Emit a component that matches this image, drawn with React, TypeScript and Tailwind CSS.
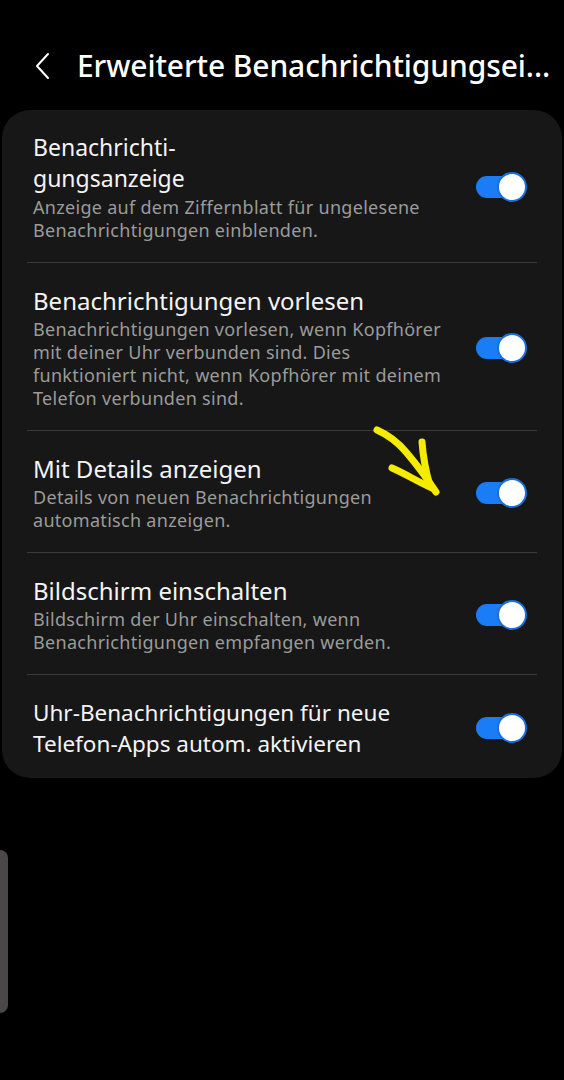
import React from "react";

interface SettingRow {
  title: string;
  subtitle?: string;
  titleSize: string;
}

// line breaks as in the phone's layout
const rows: SettingRow[] = [
  {
    title: "Benachrichti-\ngungsanzeige",
    subtitle:
      "Anzeige auf dem Ziffernblatt für ungelesene\nBenachrichtigungen einblenden.",
    titleSize: "text-[23px]",
  },
  {
    title: "Benachrichtigungen vorlesen",
    subtitle:
      "Benachrichtigungen vorlesen, wenn Kopfhörer\nmit deiner Uhr verbunden sind. Dies\nfunktioniert nicht, wenn Kopfhörer mit deinem\nTelefon verbunden sind.",
    titleSize: "text-[24px]",
  },
  {
    title: "Mit Details anzeigen",
    subtitle: "Details von neuen Benachrichtigungen\nautomatisch anzeigen.",
    titleSize: "text-[24px]",
  },
  {
    title: "Bildschirm einschalten",
    subtitle:
      "Bildschirm der Uhr einschalten, wenn\nBenachrichtigungen empfangen werden.",
    titleSize: "text-[24px]",
  },
  {
    title: "Uhr-Benachrichtigungen für neue\nTelefon-Apps autom. aktivieren",
    titleSize: "text-[22.5px]",
  },
];

function Toggle() {
  return (
    <div className="relative h-[30px] w-[51px] shrink-0">
      <div className="absolute left-0 top-[4px] h-[22px] w-[48px] rounded-full bg-[#1a7df6]" />
      <div className="absolute right-0 top-0 h-[30px] w-[30px] rounded-full border-2 border-[#1a6fd8] bg-white" />
    </div>
  );
}

export default function App() {
  return (
    <div
      className="relative h-[1080px] w-[564px] overflow-hidden bg-black text-white"
      style={{ fontFamily: "'Noto Sans', 'Open Sans', sans-serif" }}
    >
      {/* header */}
      <header className="flex h-[110px] items-center pl-[33px] pt-[22px]">
        <svg width="20" height="28" viewBox="0 0 20 28" className="shrink-0">
          <path
            d="M15 2 L4 14 L15 26"
            fill="none"
            stroke="#fff"
            strokeWidth="2"
            strokeLinecap="round"
            strokeLinejoin="round"
          />
        </svg>
        <h1 className="ml-[24px] whitespace-nowrap text-[30px] font-medium leading-none tracking-[-0.1px]">
          Erweiterte Benachrichtigungsei...
        </h1>
      </header>

      {/* settings card */}
      <div className="mx-[2px] rounded-[28px] bg-[#171717] pb-[2px]">
        {rows.map((row, i) => (
          <div
            key={i}
            className={`mx-[25px] flex items-center gap-2 pl-[6px] pr-[10px] pt-[22px] ${
              i < rows.length - 1
                ? "border-b border-[#3a3a3a] pb-[20px]"
                : "pb-[17px]"
            }`}
          >
            <div className="min-w-0 flex-1">
              <div
                className={`whitespace-pre-line ${row.titleSize} leading-[31px] text-[#f4f4f4]`}
              >
                {row.title}
              </div>
              {row.subtitle && (
                <div className="mt-[2px] whitespace-pre-line text-[18px] leading-[23px] tracking-[0.3px] text-[#9b9b9b]">
                  {row.subtitle}
                </div>
              )}
            </div>
            <Toggle />
          </div>
        ))}
      </div>

      {/* yellow hand drawn arrow */}
      <svg
        className="absolute left-[368px] top-[422px]"
        width="80"
        height="80"
        viewBox="0 0 80 80"
      >
        <g
          fill="none"
          stroke="#f6ec00"
          strokeWidth="7"
          strokeLinecap="round"
          strokeLinejoin="round"
        >
          <path d="M9 8 C18 12 28 18 38 30 C50 44 60 58 68 70" />
          <path d="M54 20 C55 34 58 50 62 64" />
          <path d="M24 46 C38 52 50 60 64 66" />
        </g>
      </svg>

      {/* partial device edge on the left */}
      <div className="absolute left-0 top-[850px] h-[163px] w-[8px] rounded-r-full bg-[#4b4749]" />
    </div>
  );
}
